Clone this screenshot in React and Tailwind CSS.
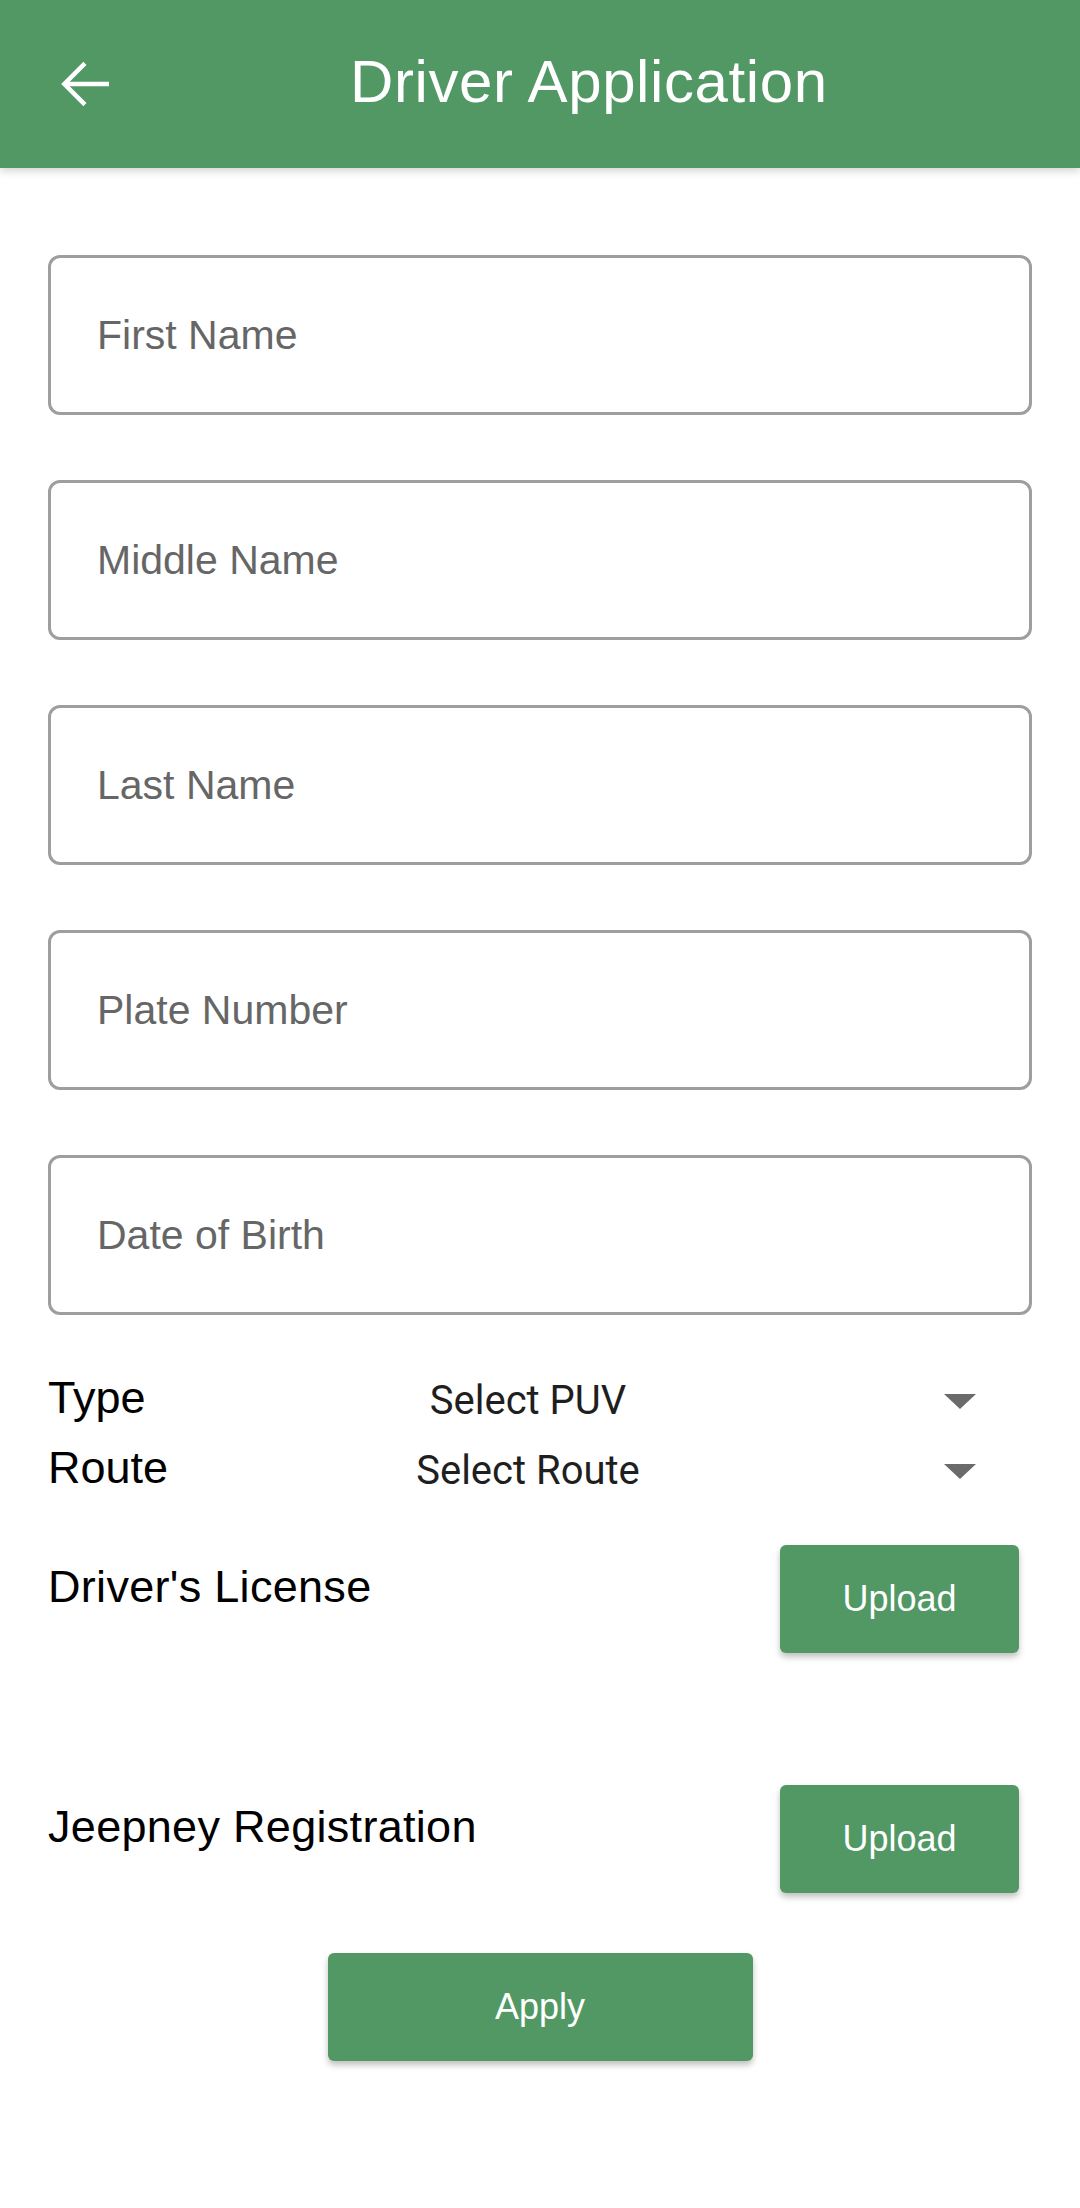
import React from "react";

const fields = ["First Name", "Middle Name", "Last Name", "Plate Number", "Date of Birth"];

function Triangle() {
  return (
    <svg width="32" height="15" viewBox="0 0 32 15" className="mt-[8px] mr-[56px] shrink-0">
      <polygon points="0,0 32,0 16,15" fill="#6b6b6b" />
    </svg>
  );
}

function SelectRow({ label, value }) {
  return (
    <div className="flex h-[70px] items-center">
      <div className="w-[200px] shrink-0 text-[45px] leading-none text-black">{label}</div>
      <div className="flex flex-1 items-center justify-between">
        <div className="mt-[8px] w-[560px] text-center font-['Roboto',sans-serif] text-[40px] leading-none text-[#1f1f1f]">
          {value}
        </div>
        <Triangle />
      </div>
    </div>
  );
}

function UploadRow({ label }) {
  return (
    <div className="flex items-start justify-between">
      <div className="mt-[19px] text-[45px] leading-none tracking-[0.3px] text-black">{label}</div>
      <button className="mr-[13px] flex h-[108px] w-[239px] items-center justify-center rounded-[6px] bg-[#529864] text-[36px] leading-none text-white shadow-[0_4px_6px_rgba(0,0,0,0.25)]">
        Upload
      </button>
    </div>
  );
}

export default function App() {
  return (
    <div className="min-h-[2208px] w-[1080px] bg-white font-['Liberation_Sans',Arial,sans-serif]">
      <header className="relative z-10 flex h-[168px] items-center bg-[#529864] pb-[4px] pl-[49px] shadow-[0_3px_8px_rgba(0,0,0,0.18)]">
        <svg width="72" height="72" viewBox="0 0 24 24" className="mt-[4px] shrink-0">
          <path fill="#ffffff" d="M20 11.25H6.9l5.6-5.6L11.45 4.6 4.05 12l7.4 7.4 1.05-1.05-5.6-5.6H20z" />
        </svg>
        <h1 className="ml-[229px] text-[60px] font-normal leading-none tracking-[0.6px] text-white">
          Driver Application
        </h1>
      </header>

      <main className="px-[48px]">
        <div className="flex flex-col gap-[65px] pt-[87px]">
          {fields.map((f) => (
            <div
              key={f}
              className="flex h-[160px] items-center rounded-[12px] border-[3px] border-[#9e9e9e] pl-[46px] text-[41px] leading-none text-[#666666]"
            >
              {f}
            </div>
          ))}
        </div>

        <div className="mt-[47px] flex flex-col">
          <SelectRow label="Type" value="Select PUV" />
          <SelectRow label="Route" value="Select Route" />
        </div>

        <div className="mt-[43px] flex flex-col gap-[132px]">
          <UploadRow label="Driver's License" />
          <UploadRow label="Jeepney Registration" />
        </div>

        <div className="mt-[60px] flex justify-center">
          <button className="flex h-[108px] w-[425px] items-center justify-center rounded-[6px] bg-[#529864] text-[36px] leading-none text-white shadow-[0_4px_6px_rgba(0,0,0,0.25)]">
            Apply
          </button>
        </div>
      </main>
    </div>
  );
}
